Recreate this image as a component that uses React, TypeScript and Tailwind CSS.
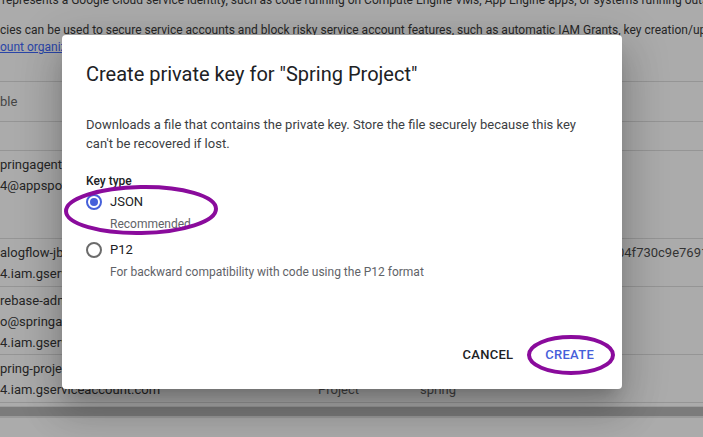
import React from "react";

const rows = [
  { h: "h-[88px]", lines: ["pringagent-", "4@appspot.gserviceaccount.com"], name: [], desc: [], key: [] },
  { h: "h-[48px]", lines: ["alogflow-jbxkqe@springagent", "4.iam.gserviceaccount.com"], name: [], desc: [], key: ["04f730c9e7691a2b3c"] },
  {
    h: "h-[68px]",
    lines: ["rebase-adminsdk-4x2nk", "o@springagent-", "4.iam.gserviceaccount.com"],
    name: [],
    desc: [],
    key: [],
  },
  { h: "h-[48px]", lines: ["pring-project@springagent-", "4.iam.gserviceaccount.com"], name: ["Spring", "Project"], desc: ["", "spring"], key: [] },
];

function Radio({ checked }: { checked: boolean }) {
  return (
    <span
      className={`flex h-[16px] w-[16px] shrink-0 items-center justify-center rounded-full border-2 ${
        checked ? "border-[#4660da]" : "border-[#6b6b6b]"
      }`}
    >
      {checked && <span className="h-[8px] w-[8px] rounded-full bg-[#4660da]" />}
    </span>
  );
}

export default function App() {
  return (
    <div className="relative h-[437px] w-[703px] overflow-hidden bg-[#ababab] font-['Roboto','Liberation_Sans',sans-serif] text-[13px] text-[#262626]">
      {/* page behind the dialog */}
      <div className="flex flex-col">
        <div className="h-[82px] border-b border-[#959595] whitespace-nowrap text-[12px]">
          <p className="-mt-[9px] ml-[2px] leading-[18px]">
            represents a Google Cloud service identity, such as code running on Compute Engine VMs, App Engine apps, or systems running outside Google.
          </p>
          <p className="mt-[13px] leading-[17px]">
            cies can be used to secure service accounts and block risky service account features, such as automatic IAM Grants, key creation/upload, or the creation of service accounts completely.
            <br />
            <span className="text-[#2a45a8] underline">ount organization policies</span>
          </p>
        </div>
        <div className="flex h-[40px] items-center border-b border-[#959595] text-[#454545]">ble</div>
        <div className="h-[29px] border-b border-[#959595]" />
        {rows.map((r, i) => (
          <div key={i} className={`${r.h} flex border-b border-[#959595] pt-[3px] leading-[21px] whitespace-nowrap`}>
            <div className="w-[318px] shrink-0">
              {r.lines.map((l, j) => (
                <div key={j}>{l}</div>
              ))}
            </div>
            <div className="w-[102px] shrink-0 text-[#444]">
              {r.name.map((l, j) => (
                <div key={j} className="h-[21px]">{l}</div>
              ))}
            </div>
            <div className="w-[197px] shrink-0 text-[#444]">
              {r.desc.map((l, j) => (
                <div key={j} className="h-[21px]">{l}</div>
              ))}
            </div>
            <div className="shrink-0 text-[#333]">
              {r.key.map((l, j) => (
                <div key={j}>{l}</div>
              ))}
            </div>
          </div>
        ))}
        <div className="h-[4px] border-b border-[#9c9c9c]" />
        <div className="h-[9px] bg-[#7b7b7b]" />
        <div className="h-[2px] bg-[#9a9a9a]" />
      </div>

      {/* dialog */}
      <div className="absolute left-[62px] top-[35px] flex h-[354px] w-[560px] flex-col rounded-[4px] bg-white pb-4 shadow-[0_11px_15px_-7px_rgba(0,0,0,0.2),0_24px_38px_3px_rgba(0,0,0,0.14),0_9px_46px_8px_rgba(0,0,0,0.12)]">
        <h2 className="px-6 pt-[25px] text-[20px] leading-[28px] font-normal text-[#202124]">
          Create private key for "Spring Project"
        </h2>
        <p className="mt-[27px] px-6 text-[13px] leading-[19px] text-[#3c4043]">
          Downloads a file that contains the private key. Store the file securely because this key can't be recovered if lost.
        </p>
        <div className="mt-[20px] px-6 text-[12px] leading-[16px] font-medium text-[#202124]">Key type</div>
        <div className="mt-[3px] flex h-[20px] items-center gap-2 px-6 text-[13px] text-[#202124]">
          <Radio checked />
          <span>JSON</span>
        </div>
        <div className="mt-[4px] pl-[48px] text-[12px] leading-[16px] text-[#5f6368]">Recommended</div>
        <div className="mt-[8px] flex h-[20px] items-center gap-2 px-6 text-[13px] text-[#202124]">
          <Radio checked={false} />
          <span>P12</span>
        </div>
        <div className="mt-[4px] pl-[48px] text-[12px] leading-[16px] text-[#5f6368]">
          For backward compatibility with code using the P12 format
        </div>
        <div className="mt-auto flex justify-end gap-4 px-5">
          <button className="h-[36px] min-w-[64px] px-2 text-[13px] font-medium tracking-[0.02em] text-[#202124]">CANCEL</button>
          <button className="h-[36px] min-w-[64px] px-2 text-[13px] font-medium tracking-[0.02em] text-[#4660da]">CREATE</button>
        </div>
      </div>

      {/* hand-drawn annotations */}
      <svg className="pointer-events-none absolute inset-0" width="703" height="437">
        <ellipse cx="141" cy="210" rx="75" ry="23" fill="none" stroke="#8a0b9c" strokeWidth="4" transform="rotate(-1 141 210)" />
        <ellipse cx="571" cy="355" rx="42" ry="18" fill="none" stroke="#8a0b9c" strokeWidth="4" />
      </svg>
    </div>
  );
}
